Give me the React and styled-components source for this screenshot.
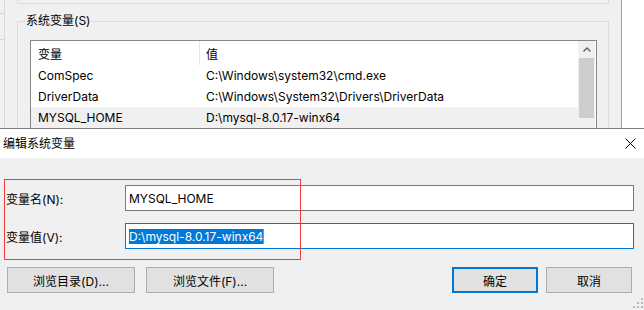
import React from 'react';
import styled, { createGlobalStyle } from 'styled-components';

const Global = createGlobalStyle`
  html, body { margin: 0; padding: 0; background: #fff; }
  body {
    width: 644px; height: 310px; overflow: hidden;
    font-family: "Inter", "Noto Sans CJK SC", sans-serif;
    font-size: 12px; color: #000;
  }
  * { box-sizing: border-box; }
`;

const Screen = styled.div`
  width: 644px; height: 310px;
  display: flex; flex-direction: column; overflow: hidden;
`;

/* ---------- background window (环境变量) ---------- */
const BackWindow = styled.div`
  flex: none; height: 128px; display: flex; overflow: hidden; background: #fff;
`;
const EdgeStrip = styled.div`
  flex: none; width: 5px; background: #f0f0f0; border-right: 1px solid #d9d9d9;
  display: flex; flex-direction: column;
`;
const EdgeTick = styled.div`
  height: 1px; background: #d5d5d5; margin-top: ${p => p.$gap}px;
`;
const Panel = styled.div`
  flex: none; width: 617px; background: #f0f0f0; border-right: 1px solid #a0a0a0;
  padding-left: 12px; display: flex; flex-direction: column;
`;
const PrevGroupEnd = styled.div`
  flex: none; width: 592px; height: 4px;
  border: 1px solid #dcdcdc; border-top: none;
`;
const GroupBox = styled.fieldset`
  flex: none; margin: 10px 0 0 0; width: 592px; min-width: 0;
  border: 1px solid #dcdcdc; padding: 12px 11px 0 7px;
`;
const GroupTitle = styled.legend`
  padding: 0 1px; line-height: 14px; font-size: 12px;
`;
const ListView = styled.div`
  margin-left: 5px; width: 567px; height: 110px;
  border: 1px solid #828790; background: #fff; display: flex;
`;
const ListBody = styled.div`
  flex: 1; display: flex; flex-direction: column;
`;
const ListRow = styled.div`
  display: grid; grid-template-columns: 169px 1fr;
  height: ${p => (p.$header ? 24 : 21)}px;
  background: ${p => (p.$selected ? '#f0f0f0' : '#fff')};
`;
const Cell = styled.div`
  display: flex; align-items: center; white-space: nowrap; overflow: hidden;
  padding-left: ${p => (p.$first ? 7 : 6)}px;
  border-right: ${p => (p.$divider ? '1px solid #e5e5e5' : 'none')};
`;
const ScrollBar = styled.div`
  flex: none; width: 17px; margin-right: 1px; background: #f0f0f0;
  display: flex; flex-direction: column;
`;
const ScrollArrow = styled.div`
  height: 17px; display: flex; align-items: center; justify-content: center;
`;
const ScrollThumb = styled.div`
  height: 60px; margin: 0 1px; background: #cdcdcd;
`;
const OuterRest = styled.div`
  flex: 1; background: #fff;
`;

/* ---------- foreground dialog (编辑系统变量) ---------- */
const Dialog = styled.div`
  flex: 1; display: flex; flex-direction: column;
  border-top: 1px solid #7a7a7a; background: #f0f0f0;
`;
const TitleBar = styled.div`
  flex: none; height: 29px; background: #fff;
  display: flex; align-items: center; justify-content: space-between;
  padding-left: 3px;
`;
const TitleText = styled.div`
  font-size: 12px; line-height: 16px;
`;
const CloseBox = styled.div`
  width: 28px; height: 29px; display: flex; align-items: center; justify-content: center;
`;
const Body = styled.div`
  flex: 1; position: relative;
  padding: 27px 10px 0 6px;
  display: flex; flex-direction: column;
`;
const FieldRow = styled.div`
  display: grid; grid-template-columns: 119px 509px;
  height: 26px; margin-top: ${p => p.$gap || 0}px;
`;
const FieldLabel = styled.div`
  display: flex; align-items: center; white-space: nowrap;
`;
const TextBox = styled.div`
  display: flex; align-items: center; background: #fff;
  border: 1px solid ${p => (p.$focused ? '#0078d7' : '#7a7a7a')};
  padding-left: 3px; white-space: nowrap;
`;
const Selected = styled.span`
  display: inline-block; line-height: 15px; background: #0078d7; color: #fff;
  border-right: 1px solid #f07a1e;
`;
const Annotation = styled.div`
  position: absolute; left: 4px; top: 21px; width: 297px; height: 81px;
  border: 1px solid #ee3b3b; pointer-events: none;
`;
const ButtonRow = styled.div`
  display: flex; margin-top: 18px; padding-left: 1px; padding-right: 2px; height: 26px;
`;
const Button = styled.div`
  flex: none; width: ${p => p.$w}px; margin-left: ${p => p.$ml || 0}px;
  display: flex; align-items: center; justify-content: center;
  background: #e1e1e1;
  border: ${p => (p.$primary ? '2px solid #0078d7' : '1px solid #adadad')};
  white-space: nowrap;
`;
const Spacer = styled.div` flex: 1; `;
const Grip = styled.div`
  position: absolute; right: 1px; bottom: 2px; width: 10px; height: 10px; display: flex;
`;

const UpChevron = () => (
  <svg width="8" height="5" viewBox="0 0 8 5">
    <path d="M0.5 4.5 L4 1 L7.5 4.5" fill="none" stroke="#606060" strokeWidth="1.4" />
  </svg>
);

const CloseIcon = () => (
  <svg width="11" height="11" viewBox="0 0 11 11">
    <path d="M0.5 0.5 L10.5 10.5 M10.5 0.5 L0.5 10.5" stroke="#000" strokeWidth="1" />
  </svg>
);

const GripIcon = () => (
  <svg width="10" height="10" viewBox="0 0 10 10">
    {[[8, 0], [8, 4], [4, 4], [8, 8], [4, 8], [0, 8]].map(([x, y]) => (
      <rect key={`${x}-${y}`} x={x} y={y} width="2" height="2" fill="#b8b8b8" />
    ))}
  </svg>
);

const rows = [
  { name: 'ComSpec', value: 'C:\\Windows\\system32\\cmd.exe' },
  { name: 'DriverData', value: 'C:\\Windows\\System32\\Drivers\\DriverData' },
  { name: 'MYSQL_HOME', value: 'D:\\mysql-8.0.17-winx64', selected: true },
];

export default function App() {
  return (
    <>
      <Global />
      <Screen>
        <BackWindow>
          <EdgeStrip>
            <EdgeTick $gap={13} />
            <EdgeTick $gap={25} />
          </EdgeStrip>
          <Panel>
            <PrevGroupEnd />
            <GroupBox>
              <GroupTitle>系统变量(S)</GroupTitle>
              <ListView>
                <ListBody>
                  <ListRow $header>
                    <Cell $first $divider>变量</Cell>
                    <Cell>值</Cell>
                  </ListRow>
                  {rows.map(r => (
                    <ListRow key={r.name} $selected={r.selected}>
                      <Cell $first>{r.name}</Cell>
                      <Cell>{r.value}</Cell>
                    </ListRow>
                  ))}
                </ListBody>
                <ScrollBar>
                  <ScrollArrow><UpChevron /></ScrollArrow>
                  <ScrollThumb />
                </ScrollBar>
              </ListView>
            </GroupBox>
          </Panel>
          <OuterRest />
        </BackWindow>

        <Dialog>
          <TitleBar>
            <TitleText>编辑系统变量</TitleText>
            <CloseBox><CloseIcon /></CloseBox>
          </TitleBar>
          <Body>
            <FieldRow>
              <FieldLabel>变量名(N):</FieldLabel>
              <TextBox>MYSQL_HOME</TextBox>
            </FieldRow>
            <FieldRow $gap={12}>
              <FieldLabel>变量值(V):</FieldLabel>
              <TextBox $focused><Selected>D:\mysql-8.0.17-winx64</Selected></TextBox>
            </FieldRow>
            <ButtonRow>
              <Button $w={128}>浏览目录(D)...</Button>
              <Button $w={128} $ml={11}>浏览文件(F)...</Button>
              <Spacer />
              <Button $w={86} $primary>确定</Button>
              <Button $w={86} $ml={8}>取消</Button>
            </ButtonRow>
            <Annotation />
            <Grip><GripIcon /></Grip>
          </Body>
        </Dialog>
      </Screen>
    </>
  );
}
